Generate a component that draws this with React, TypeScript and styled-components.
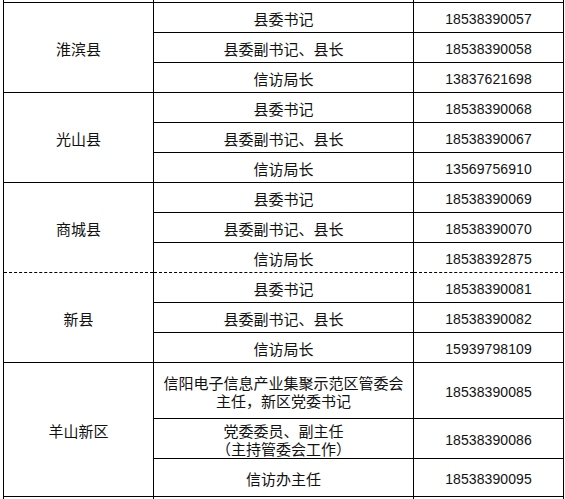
import React from "react";
import styled, { createGlobalStyle } from "styled-components";

interface Row {
  title: string;
  phone: string;
  height?: number;
}

interface Group {
  county: string;
  // page break drawn as a dashed line above this group
  dashed?: boolean;
  rows: Row[];
}

interface CellProps {
  $h?: number;
  $dashTop?: boolean;
  $dashBottom?: boolean;
}

const GlobalStyle = createGlobalStyle`
  html, body {
    margin: 0;
    padding: 0;
    background: #fff;
  }
  body {
    font-family: "Noto Sans CJK SC", "Noto Sans", sans-serif;
    color: #111;
  }
`;

const Page = styled.div`
  width: 565px;
  height: 499px;
  overflow: hidden;
  padding-left: 3px;
  box-sizing: border-box;
`;

const Table = styled.table`
  border-collapse: collapse;
  table-layout: fixed;
  width: 561px;
`;

const Col = styled.col<{ $w: number }>`
  width: ${(p) => p.$w}px;
`;

// collapsed borders: row pitch = height + padding-top + 1px
const Cell = styled.td<CellProps>`
  border: 1px solid #000;
  ${(p) => (p.$dashTop ? "border-top: 1px dashed #000;" : "")}
  ${(p) => (p.$dashBottom ? "border-bottom: 1px dashed #000;" : "")}
  height: ${(p) => (p.$h ?? 30) - 3}px;
  padding: 2px 0 0;
  text-align: center;
  vertical-align: middle;
  font-size: 15px;
  line-height: 18px;
  white-space: pre-line;
`;

const SpacerCell = styled.td`
  border: 1px solid #000;
  border-top: none;
  height: 2px;
  padding: 0;
`;

const PhoneCell = styled(Cell)`
  font-family: "Liberation Sans", Arial, sans-serif;
  font-size: 14px;
  letter-spacing: 0.1px;
`;

const groups: Group[] = [
  {
    county: "淮滨县",
    rows: [
      { title: "县委书记", phone: "18538390057" },
      { title: "县委副书记、县长", phone: "18538390058" },
      { title: "信访局长", phone: "13837621698" },
    ],
  },
  {
    county: "光山县",
    rows: [
      { title: "县委书记", phone: "18538390068" },
      { title: "县委副书记、县长", phone: "18538390067" },
      { title: "信访局长", phone: "13569756910" },
    ],
  },
  {
    county: "商城县",
    rows: [
      { title: "县委书记", phone: "18538390069" },
      { title: "县委副书记、县长", phone: "18538390070" },
      { title: "信访局长", phone: "18538392875" },
    ],
  },
  {
    county: "新县",
    dashed: true,
    rows: [
      { title: "县委书记", phone: "18538390081" },
      { title: "县委副书记、县长", phone: "18538390082" },
      { title: "信访局长", phone: "15939798109" },
    ],
  },
  {
    county: "羊山新区",
    rows: [
      {
        title: "信阳电子信息产业集聚示范区管委会\n主任，新区党委书记",
        phone: "18538390085",
        height: 56,
      },
      {
        title: "党委委员、副主任\n（主持管委会工作）",
        phone: "18538390086",
        height: 40,
      },
      { title: "信访办主任", phone: "18538390095", height: 38 },
    ],
  },
];

const App = () => {
  return (
    <Page>
      <GlobalStyle />
      <Table>
        <colgroup>
          <Col $w={150} />
          <Col $w={260} />
          <Col $w={150} />
        </colgroup>
        <tbody>
          <tr>
            <SpacerCell />
            <SpacerCell />
            <SpacerCell />
          </tr>
          {groups.map((g, gi) => {
            const nextDashed = !!groups[gi + 1]?.dashed;
            const last = g.rows.length - 1;
            return g.rows.map((r, i) => {
              const top = i === 0 && !!g.dashed;
              const bottom = i === last && nextDashed;
              return (
                <tr key={g.county + i}>
                  {i === 0 && (
                    <Cell
                      rowSpan={g.rows.length}
                      $dashTop={g.dashed}
                      $dashBottom={nextDashed}
                    >
                      {g.county}
                    </Cell>
                  )}
                  <Cell $h={r.height} $dashTop={top} $dashBottom={bottom}>
                    {r.title}
                  </Cell>
                  <PhoneCell $h={r.height} $dashTop={top} $dashBottom={bottom}>
                    {r.phone}
                  </PhoneCell>
                </tr>
              );
            });
          })}
          <tr>
            <Cell />
            <Cell />
            <Cell />
          </tr>
        </tbody>
      </Table>
    </Page>
  );
};

export default App;
